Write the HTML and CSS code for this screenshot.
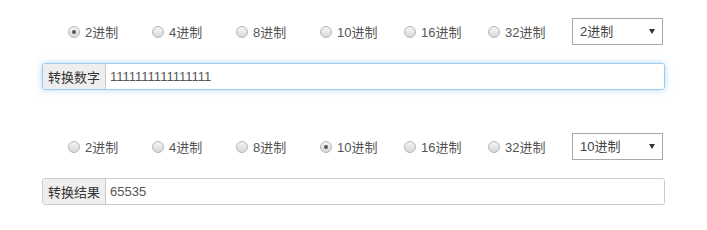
FILE: index.html
```html
<!DOCTYPE html>
<html lang="zh-CN">
<head>
  <meta charset="UTF-8">
  <title>进制转换</title>
  <meta name="viewport" content="width=device-width, initial-scale=1">
  <link rel="stylesheet" href="styles.css">
</head>
<body>

  <div class="converter">
    <!-- 输入 -->
    <div class="block">
      <div class="radio-row">
        <label class="radio"><input type="radio" name="from" checked>2进制</label>
        <label class="radio"><input type="radio" name="from">4进制</label>
        <label class="radio"><input type="radio" name="from">8进制</label>
        <label class="radio"><input type="radio" name="from">10进制</label>
        <label class="radio"><input type="radio" name="from">16进制</label>
        <label class="radio"><input type="radio" name="from">32进制</label>
        <div class="select-wrap">
          <select class="base-select">
            <option selected>2进制</option>
            <option>4进制</option>
            <option>8进制</option>
            <option>10进制</option>
            <option>16进制</option>
            <option>32进制</option>
          </select>
        </div>
      </div>
      <div class="input-group focused">
        <span class="addon">转换数字</span>
        <input class="field" type="text" value="1111111111111111">
      </div>
    </div>

    <!-- 输出 -->
    <div class="block">
      <div class="radio-row">
        <label class="radio"><input type="radio" name="to">2进制</label>
        <label class="radio"><input type="radio" name="to">4进制</label>
        <label class="radio"><input type="radio" name="to">8进制</label>
        <label class="radio"><input type="radio" name="to" checked>10进制</label>
        <label class="radio"><input type="radio" name="to">16进制</label>
        <label class="radio"><input type="radio" name="to">32进制</label>
        <div class="select-wrap">
          <select class="base-select">
            <option>2进制</option>
            <option>4进制</option>
            <option>8进制</option>
            <option selected>10进制</option>
            <option>16进制</option>
            <option>32进制</option>
          </select>
        </div>
      </div>
      <div class="input-group">
        <span class="addon">转换结果</span>
        <input class="field" type="text" value="65535" readonly>
      </div>
    </div>
  </div>

</body>
</html>
```

FILE: styles.css
```css
body {
  margin: 0;
  padding: 18px 0 0;
  font-family: "Liberation Sans", "Noto Sans CJK SC", sans-serif;
  font-size: 13px;
  color: #555;
  background: #fff;
}
.converter {
  margin-left: 42px;
  width: 623px;
}
.block {
  margin-bottom: 43px;
}
.block:last-child {
  margin-bottom: 0;
}
.radio-row {
  display: flex;
  align-items: center;
  height: 27px;
  padding-left: 26px;
}
.radio {
  display: flex;
  align-items: center;
  width: 84px;
  cursor: pointer;
  white-space: nowrap;
}
/* 单选框 */
.radio input {
  appearance: none;
  -webkit-appearance: none;
  width: 12px;
  height: 12px;
  margin: 0 5px 0 0;
  border: 1px solid #b4b4b4;
  border-radius: 50%;
  background: linear-gradient(#f4f4f4, #d8d8d8);
  position: relative;
}
.radio input:checked::after {
  content: "";
  position: absolute;
  left: 3px;
  top: 3px;
  width: 4px;
  height: 4px;
  border-radius: 50%;
  background: #555;
}
.select-wrap {
  position: relative;
  width: 91px;
  height: 27px;
}
.base-select {
  appearance: none;
  -webkit-appearance: none;
  width: 91px;
  height: 27px;
  border: 1px solid #a9a9a9;
  background: #fff;
  padding: 0 0 0 7px;
  font-family: inherit;
  font-size: 13px;
  color: #444;
  border-radius: 0;
}
.select-wrap::after {
  content: "";
  position: absolute;
  right: 8px;
  top: 11px;
  border-left: 3px solid transparent;
  border-right: 3px solid transparent;
  border-top: 5px solid #333;
  pointer-events: none;
}
/* 输入框组 */
.input-group {
  display: flex;
  height: 27px;
  margin-top: 18px;
  border: 1px solid #ccc;
  border-radius: 3px;
  box-sizing: border-box;
  overflow: hidden;
}
.input-group.focused {
  border-color: #9ecaed;
  box-shadow: 0 0 6px rgba(102, 175, 233, 0.5);
}
.addon {
  display: flex;
  align-items: center;
  padding: 0 5px;
  background: #eee;
  border-right: 1px solid #ccc;
  color: #333;
  white-space: nowrap;
}
.field {
  flex: 1;
  border: none;
  outline: none;
  padding: 0 4px;
  font-family: inherit;
  font-size: 13px;
  color: #555;
}
```
